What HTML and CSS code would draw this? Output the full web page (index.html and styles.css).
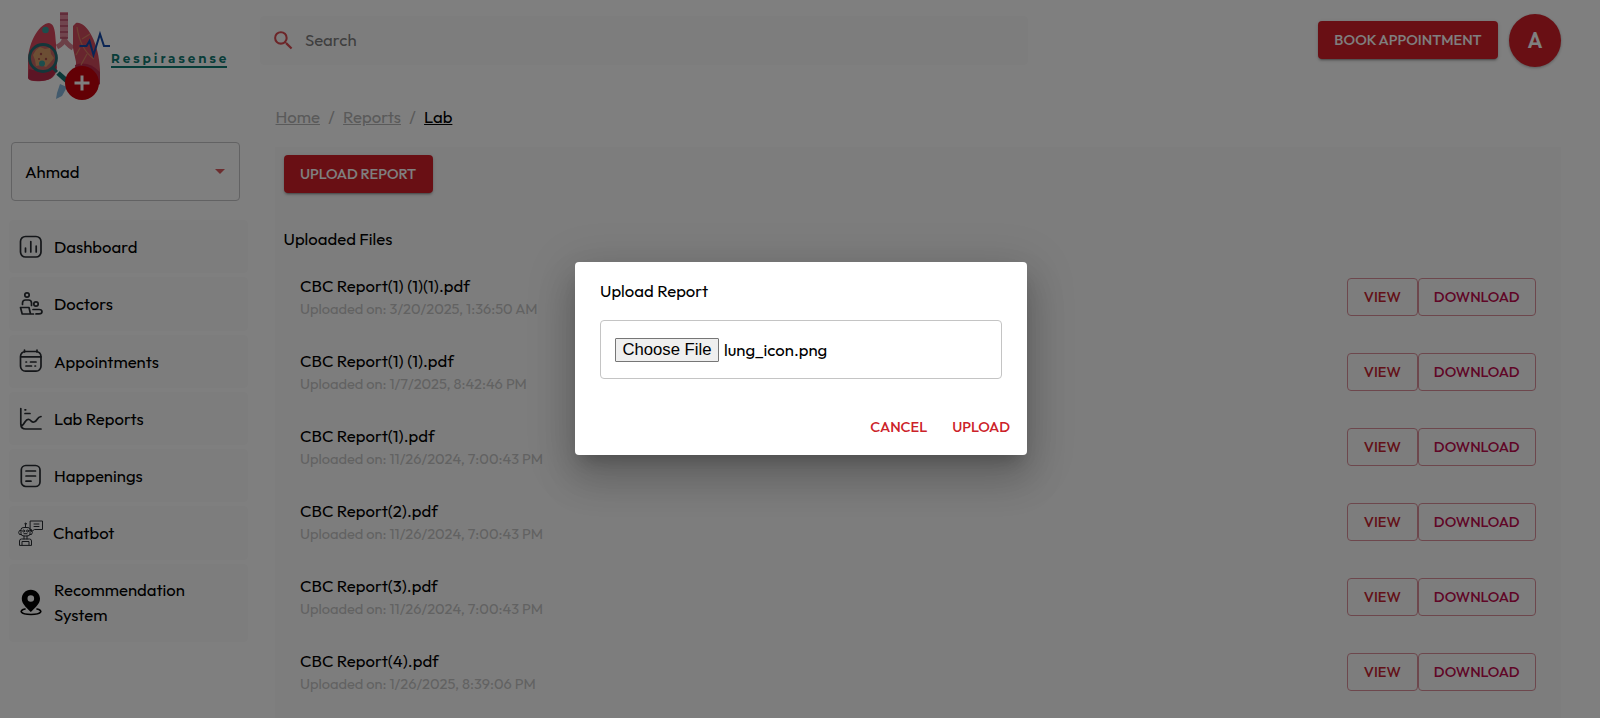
FILE: index.html
```html
<!DOCTYPE html>
<html lang="en">
<head>
<meta charset="utf-8">
<title>Respirasense</title>
<link rel="stylesheet" href="styles.css">
</head>
<body>
<div class="app">
  <aside class="sidebar">
    <div class="brand">
      <svg class="brand-mark" width="86" height="94" viewBox="26 8 86 94" fill="none">
        <path d="M64 12V38" stroke="#e08a9c" stroke-width="8"/>
        <path d="M64 36V40Q63 44 57 47M64 38Q66 44 73 48" stroke="#d9808f" stroke-width="5"/>
        <path d="M60 14h8M60 20h8M60 26h8M60 32h8M60 38h8" stroke="#b84c68" stroke-width="1.6"/>
        <path d="M49 23C41 23 28 40 28 62V78Q29 82 42 81Q56 80 57 68L56 44C55 32 55 24 49 23Z" fill="#d9475c"/>
        <path d="M29 69Q40 73 56 65V70Q53 81 40 81Q29 81 28 78Z" fill="#b92b4b"/>
        <path d="M76 23C86 21 99 42 100 70V84Q90 91 76 75V62L73 48V26Z" fill="#d04b5d"/>
        <path d="M75 65Q88 60 100 72V84Q90 91 76 75Z" fill="#b92b4b"/>
        <path d="M77 27Q80 49 94 59M82 39l8-5M80 48l-4 7M87 54l-6 11" stroke="#d98262" stroke-width="1.2"/>
        <circle cx="45.500" cy="30" r="3.300" fill="#389c9b"/>
        <circle cx="43" cy="58" r="13.500" fill="#c76462" stroke="#286d74" stroke-width="2.800"/>
        <path d="M36 50l4-3 5 2 5-1 1 6 3 4-4 5-4 4-5-2-5 1-1-6-2-5z" fill="#d99d68"/>
        <circle cx="41" cy="54" r="1.200" fill="#a54a48"/><circle cx="46" cy="59" r="1.200" fill="#a54a48"/><circle cx="39" cy="59" r="1" fill="#a54a48"/>
        <circle cx="42" cy="63.500" r="3" fill="#389c9b"/>
        <path d="M53 68l4 4" stroke="#286d74" stroke-width="3"/>
        <path d="M58 73l9 8" stroke="#147271" stroke-width="5"/>
        <path d="M60 84l7 3-5 9-6 3 1-6z" fill="#84b5da"/>
        <path d="M79.500 46h7l3-5 4 14 6.500-21 4 12h6" stroke="#154aa8" stroke-width="2"/>
        <circle cx="82" cy="83" r="17" fill="#c6000b"/>
        <path d="M82 75.500v15M74.500 83h15" stroke="#fff" stroke-width="3"/>
      </svg>
      <span class="brand-name">Respirasense</span>
    </div>
    <div class="patient"><span>Ahmad</span><i class="caret"></i></div>
    <nav class="menu">
      <a class="item"><svg class="ico" viewBox="0 0 24 24"><rect x="1.500" y="1.500" width="20.500" height="20.500" rx="5"/><path d="M6.500 13v4M11.800 6.500V17M17.200 11v6"/></svg><span>Dashboard</span></a>
      <a class="item"><svg class="ico" viewBox="0 0 24 24"><circle cx="8" cy="3" r="2.200"/><circle cx="17" cy="12" r="2.200"/><path d="M3.500 12.500V11q0-3 3-3h3q3 0 3 3v2.500M1.500 15.500h8.500l1.500 6.500H3.200zM11.500 22h3M14 17.500h6q3 0 3 2.200t-3 2.200h-3"/></svg><span>Doctors</span></a>
      <a class="item"><svg class="ico" viewBox="0 0 24 24"><rect x="1.500" y="2.500" width="20.500" height="19.700" rx="5"/><path d="M2 7.800h20M5.500 1v2M18 1v2M7 13h.5M11.500 13h5.500M7 17h5.500M16 17h.5"/></svg><span>Appointments</span></a>
      <a class="item"><svg class="ico" viewBox="0 0 24 24"><path d="M1.800 1.500V17q0 5 5 5H22M2.500 19C7 16 6 11.500 10 12.500c2 .5 2.500 3 5 2.500C19 14 17.500 10 22 9.500M6 2.800h.7M6 6.500h5"/></svg><span>Lab Reports</span></a>
      <a class="item"><svg class="ico" viewBox="0 0 24 24"><rect x="2.300" y="1.500" width="18.700" height="21" rx="4.500"/><path d="M7 7h9.500M7 12h9.500M7 17.200h5"/></svg><span>Happenings</span></a>
      <a class="item up"><svg class="ico bot" viewBox="0 0 26 26"><path d="M4 9q0-1.500 3-1.500h3q3 0 3 1.500v5q0 2-3 2H7q-3 0-3-2zM8.500 7.500V4M4 10.500H2.500Q.8 12.500 2.500 14.500H4M13 10.500h1.500q1.700 2 0 4H13M7 16v3M10 16v3M2.500 25v-4q0-2 2-2h8q2 0 2 2v4zM5 25v-3.500h7V25M13.500 1H25.500v8.500h-8l-3 2V9.500h-1zM17 4h5M17 6.500h5"/><circle cx="8.500" cy="3.800" r=".7"/><circle cx="6.700" cy="11" r="1"/><circle cx="10.500" cy="11" r="1"/><path d="M7 13.700h3"/></svg><span>Chatbot</span></a>
      <a class="item tall up"><svg class="ico pin" viewBox="0 0 24 28"><path class="solid" fill-rule="evenodd" d="M11.800.8C6.500.8 2.800 4.800 2.800 9.800c0 5 4 8.200 9 13.200 5-5 9.200-8.200 9.200-13.200 0-5-4-9-9.200-9zm0 5.400a3.300 3.300 0 1 1 0 6.600 3.300 3.300 0 0 1 0-6.600z"/><path d="M6 20c-6 1-5.500 5.500 6 5.500s12-4.500 6-5.500"/></svg><span>Recommendation<br>System</span></a>
    </nav>
  </aside>
  <main class="main">
    <header class="top">
      <div class="search"><svg width="25" height="25" viewBox="0 0 24 24"><path d="M15.500 14h-.79l-.28-.27A6.471 6.471 0 0 0 16 9.500 6.500 6.500 0 1 0 9.500 16c1.610 0 3.090-.59 4.230-1.570l.27.28v.79l5 4.990L20.490 19l-4.990-5zm-6 0C7.010 14 5 11.990 5 9.500S7.010 5 9.500 5 14 7.010 14 9.500 11.990 14 9.500 14z"/></svg><span>Search</span></div>
      <div class="account"><button class="btn book">BOOK APPOINTMENT</button><span class="avatar">A</span></div>
    </header>
    <div class="crumbs"><a>Home</a><i>/</i><a>Reports</a><i>/</i><a class="current">Lab</a></div>
    <section class="panel">
      <button class="btn upload">UPLOAD REPORT</button>
      <h2 class="heading">Uploaded Files</h2>
      <div class="row"><div><div class="name">CBC Report(1) (1)(1).pdf</div><div class="date">Uploaded on: 3/20/2025, 1:36:50 AM</div></div><div class="acts"><button class="out view">VIEW</button><button class="out down">DOWNLOAD</button></div></div>
      <div class="row"><div><div class="name">CBC Report(1) (1).pdf</div><div class="date">Uploaded on: 1/7/2025, 8:42:46 PM</div></div><div class="acts"><button class="out view">VIEW</button><button class="out down">DOWNLOAD</button></div></div>
      <div class="row"><div><div class="name">CBC Report(1).pdf</div><div class="date">Uploaded on: 11/26/2024, 7:00:43 PM</div></div><div class="acts"><button class="out view">VIEW</button><button class="out down">DOWNLOAD</button></div></div>
      <div class="row"><div><div class="name">CBC Report(2).pdf</div><div class="date">Uploaded on: 11/26/2024, 7:00:43 PM</div></div><div class="acts"><button class="out view">VIEW</button><button class="out down">DOWNLOAD</button></div></div>
      <div class="row"><div><div class="name">CBC Report(3).pdf</div><div class="date">Uploaded on: 11/26/2024, 7:00:43 PM</div></div><div class="acts"><button class="out view">VIEW</button><button class="out down">DOWNLOAD</button></div></div>
      <div class="row"><div><div class="name">CBC Report(4).pdf</div><div class="date">Uploaded on: 1/26/2025, 8:39:06 PM</div></div><div class="acts"><button class="out view">VIEW</button><button class="out down">DOWNLOAD</button></div></div>
    </section>
  </main>
</div>
<div class="backdrop">
  <div class="dialog">
    <div class="dialog-title">Upload Report</div>
    <div class="file"><span class="choose">Choose File</span><span class="filename">lung_icon.png</span></div>
    <div class="dialog-actions"><span>CANCEL</span><span>UPLOAD</span></div>
  </div>
</div>
</body>
</html>
```
FILE: styles.css
```css
* { box-sizing: border-box; }
body {
  margin: 0;
  height: 718px;
  overflow: hidden;
  background: #fff;
  color: #000;
  font: 400 16.7px/25px Outfit, Lato, sans-serif;
}
button { font: inherit; border: 0; margin: 0; padding: 0; white-space: nowrap; }
.app { display: flex; height: 718px; overflow: hidden; }

/* sidebar */
.sidebar { width: 260px; flex: none; }
.brand { display: flex; height: 142px; padding: 8px 0 0 26px; }
.brand-mark { flex: none; }
.brand-name {
  align-self: flex-start;
  width: 116px;
  height: 18px;
  margin: 42px 0 0 -1px;
  border-bottom: 2px solid #107a72;
  color: #107a72;
  font: 700 12px/17px Montserrat, Lato, sans-serif;
  letter-spacing: 2.95px;
  white-space: nowrap;
}
.patient {
  display: flex;
  align-items: center;
  justify-content: space-between;
  width: 229px;
  height: 59px;
  margin-left: 11px;
  padding: 0 14px 0 13px;
  border: 1px solid #c4c4c6;
  border-radius: 4px;
}
.patient span { margin-top: -1px; }
.caret { border: 5px solid transparent; border-top-color: #d95a5e; border-bottom: 0; }
.menu { display: flex; flex-direction: column; gap: 4px; margin: 19px 0 0 9px; width: 239px; }
.item {
  display: flex;
  align-items: center;
  height: 53.3px;
  padding-left: 10px;
  gap: 11px;
  border-radius: 4px;
  background: #fbfbfb;
}
.tall { height: 78px; }
.up span { margin-top: -1px; }
.ico { width: 24px; height: 24px; flex: none; fill: none; stroke: #292d32; stroke-width: 1.7; stroke-linecap: round; stroke-linejoin: round; overflow: visible; }
.bot { width: 26px; height: 26px; margin: 0 0 0 -2px; stroke-width: 1; }
.bot + span { margin-left: -1px; }
.pin { height: 28px; stroke: #000; }
.solid { fill: #000; stroke: none; }

/* header */
.main { flex: 1; display: flex; flex-direction: column; }
.top { display: flex; justify-content: space-between; height: 81px; flex: none; padding: 14px 39px 0 0; }
.search { display: flex; align-items: center; gap: 9px; width: 768px; height: 49px; margin-top: 2px; padding: 0 0 1px 11px; background: #fbfbfb; color: #7e7e7e; border-radius: 4px; }
.search svg { fill: #d94a50; }
.search span { margin-top: -1px; }
.account { display: flex; gap: 11px; }
.btn { height: 38px; flex: none; border-radius: 4px; background: #d31f29; color: #fff; font-weight: 500; font-size: 14.6px; padding-bottom: 1px; box-shadow: 0 3px 1px -2px rgba(0,0,0,.2), 0 2px 2px rgba(0,0,0,.14), 0 1px 5px rgba(0,0,0,.12); }
.book { width: 180px; margin-top: 7px; }
.avatar { width: 52px; height: 53px; border-radius: 50%; background: #d31f29; color: #fff; font-weight: 600; font-size: 21px; line-height: 52px; text-align: center; box-shadow: 0 1px 3px rgba(0,0,0,.3); }
.crumbs { display: flex; gap: 8.3px; height: 66px; flex: none; padding: 23px 0 0 15.5px; color: #b4b4b4; }
.crumbs a { text-decoration: underline; }
.crumbs i { font-style: normal; }
.crumbs .current { color: #000; }

/* reports */
.panel { flex: 1; width: 1286px; margin-left: 15px; padding: 8px 25px 0 8.5px; background: #fbfbfb; }
.upload { width: 149px; display: block; }
.heading { margin: 33px 0 8px; font: inherit; line-height: 25px; }
.row { display: flex; justify-content: space-between; align-items: center; height: 75px; padding-left: 16.5px; }
.name { margin-top: -1px; line-height: 25px; }
.date { font-size: 14.6px; line-height: 22px; color: #c4c4c4; }
.acts { display: flex; }
.out { height: 38px; border: 1px solid #db8f9a; border-radius: 4px; background: none; font-weight: 500; font-size: 14.6px; padding-bottom: 1px; }
.view { width: 70.5px; color: #c62330; }
.down { width: 118.5px; color: #c00c4e; }

/* modal */
.backdrop { position: absolute; inset: 0; display: flex; align-items: center; justify-content: center; padding-bottom: 2px; background: rgba(0,0,0,.5); }
.dialog {
  width: 452px;
  height: 193px;
  margin-left: 2px;
  padding: 16px 0 0 25px;
  border-radius: 4px;
  background: #fff;
  box-shadow: 0 11px 15px -7px rgba(0,0,0,.2), 0 24px 38px 3px rgba(0,0,0,.14), 0 9px 46px 8px rgba(0,0,0,.12);
}
.file { display: flex; align-items: center; gap: 5px; width: 402px; height: 59px; margin-top: 17px; padding: 1px 0 0 14px; border: 1px solid #c4c4c4; border-radius: 4px; }
.choose { width: 104px; height: 24px; border: 1px solid #767676; border-radius: 1px; background: #efefef; font: 16.7px/22px "Liberation Sans", sans-serif; text-align: center; }
.dialog-actions { display: flex; justify-content: flex-end; gap: 25px; margin: 35px 17px 0 0; color: #cc2229; font-weight: 500; font-size: 14.6px; }
```
